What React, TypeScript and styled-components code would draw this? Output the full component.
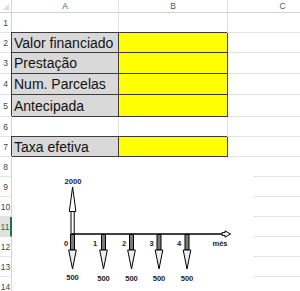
import styled, { createGlobalStyle, css } from "styled-components";

type CellKind = "plain" | "label" | "field";

type SheetRow = {
  height: number;
  label?: string;
  selected?: boolean;
};

const COLUMNS = [
  { name: "A", width: 107 },
  { name: "B", width: 109 },
  { name: "C", width: 110 },
];

const ROWS: SheetRow[] = [
  { height: 20 },
  { height: 20, label: "Valor financiado" },
  { height: 21, label: "Prestação" },
  { height: 21, label: "Num. Parcelas" },
  { height: 22, label: "Antecipada" },
  { height: 20 },
  { height: 20, label: "Taxa efetiva" },
  { height: 20 },
  { height: 20 },
  { height: 20 },
  { height: 20, selected: true },
  { height: 20 },
  { height: 20 },
  { height: 20 },
];

const PAYMENTS = [
  { x: 72.5, month: "0", labelX: 66 },
  { x: 103.5, month: "1", labelX: 95 },
  { x: 131.5, month: "2", labelX: 124 },
  { x: 159, month: "3", labelX: 151.5 },
  { x: 187, month: "4", labelX: 179 },
];

const GlobalStyle = createGlobalStyle`
  html, body {
    margin: 0;
    padding: 0;
    background: #fff;
  }
  body {
    font-family: "Liberation Sans", Arial, sans-serif;
    overflow: hidden;
  }
`;

export default function App() {
  const rowTemplate = ["13px", ...ROWS.map((r) => `${r.height}px`)].join(" ");
  const colTemplate = ["12px", ...COLUMNS.map((c) => `${c.width}px`)].join(" ");

  return (
    <>
      <GlobalStyle />
      <SheetWrapper>
        <Grid $cols={colTemplate} $rows={rowTemplate}>
          <Corner>
            <CornerTriangle />
          </Corner>
          {COLUMNS.map((col) => (
            <ColHeader key={col.name}>{col.name}</ColHeader>
          ))}

          {ROWS.map((row, i) => {
            const a: CellKind = row.label ? "label" : "plain";
            const b: CellKind = row.label ? "field" : "plain";
            return [
              <RowHeader key={`h${i}`} $selected={row.selected}>
                {i + 1}
              </RowHeader>,
              <Cell key={`a${i}`} $kind={a}>
                {row.label}
              </Cell>,
              <Cell key={`b${i}`} $kind={b} />,
              <Cell key={`c${i}`} $kind="plain" />,
            ];
          })}
        </Grid>

        <Picture>
          <CashFlow />
        </Picture>
      </SheetWrapper>
    </>
  );
}

function CashFlow() {
  return (
    <svg width="241" height="140" viewBox="12 159 241 140">
      {/* entrada de 2000 */}
      <rect x="71" y="211" width="3.2" height="23" fill="#fff" stroke="#000" strokeWidth="1" />
      <polygon points="69.3,211.5 72.6,187 75.9,211.5" fill="#fff" stroke="#000" strokeWidth="1" />
      <ChartText x="73" y="184">2000</ChartText>

      {/* linha do tempo */}
      <line x1="72" y1="234" x2="223" y2="234" stroke="#000" strokeWidth="1.6" />
      <polygon
        points="222,232.6 225,232.6 225,230.8 230.5,234 225,237.2 225,235.4 222,235.4"
        fill="#fff"
        stroke="#000"
        strokeWidth="1"
      />
      <ChartText x="220" y="246">mês</ChartText>

      {PAYMENTS.map((p, i) => (
        <g key={p.month}>
          <rect x={p.x - 2} y="234.5" width="4" height="15.5" fill="#7a7a7a" stroke="#000" strokeWidth="1" />
          <polygon
            points={`${p.x - 3.8},250 ${p.x},269 ${p.x + 3.8},250`}
            fill="#eeeeee"
            stroke="#000"
            strokeWidth="1"
          />
          <ChartText x={p.labelX} y="246">{p.month}</ChartText>
          <ChartText x={p.x} y={i === 0 ? 279.5 : 280.5}>500</ChartText>
        </g>
      ))}
    </svg>
  );
}

const ChartText = styled.text.attrs({ textAnchor: "middle", fill: "#1e1e1e" })`
  font-family: "Liberation Sans", Arial, sans-serif;
  font-size: 7.6px;
  font-weight: bold;
`;

const SheetWrapper = styled.div`
  position: relative;
  width: 300px;
  height: 291px;
  overflow: hidden;
  background: #fff;
`;

const Grid = styled.div<{ $cols: string; $rows: string }>`
  display: grid;
  grid-template-columns: ${(p) => p.$cols};
  grid-template-rows: ${(p) => p.$rows};
`;

const Corner = styled.div`
  display: flex;
  align-items: flex-end;
  justify-content: flex-end;
  padding: 0 2px 2px 0;
  box-sizing: border-box;
  border-right: 1px solid #d4d4d4;
  border-bottom: 1px solid #d4d4d4;
`;

const CornerTriangle = styled.span`
  width: 0;
  height: 0;
  border-left: 6px solid transparent;
  border-bottom: 6px solid #dcdcdc;
`;

const ColHeader = styled.div`
  display: flex;
  align-items: center;
  justify-content: center;
  box-sizing: border-box;
  border-right: 1px solid #e2e2e2;
  border-bottom: 1px solid #d4d4d4;
  font-size: 8.5px;
  color: #555;
`;

const RowHeader = styled.div<{ $selected?: boolean }>`
  display: flex;
  align-items: center;
  justify-content: center;
  box-sizing: border-box;
  border-right: 1px solid #d4d4d4;
  border-bottom: 1px solid #e2e2e2;
  font-size: 8.5px;
  color: #444;

  ${(p) =>
    p.$selected &&
    css`
      background: #e1e1e1;
      color: #217346;
      border-right: 2px solid #217346;
    `}
`;

const Cell = styled.div<{ $kind: CellKind }>`
  display: flex;
  align-items: center;
  box-sizing: border-box;
  padding-left: 2px;
  border-right: 1px solid #e2e2e2;
  border-bottom: 1px solid #e2e2e2;
  font-size: 14px;
  color: #111;
  white-space: nowrap;

  ${(p) =>
    p.$kind !== "plain" &&
    css`
      position: relative;
      z-index: 1;
      background: ${p.$kind === "label" ? "#d9d9d9" : "#ffff00"};
      border-right: 1px solid #3c3c3c;
      border-bottom: 1px solid #3c3c3c;
      box-shadow: -1px -1px 0 #3c3c3c;
    `}
`;

const Picture = styled.div`
  position: absolute;
  left: 12px;
  top: 159px;
  width: 241px;
  height: 140px;
  background: #fff;
  z-index: 2;
`;
